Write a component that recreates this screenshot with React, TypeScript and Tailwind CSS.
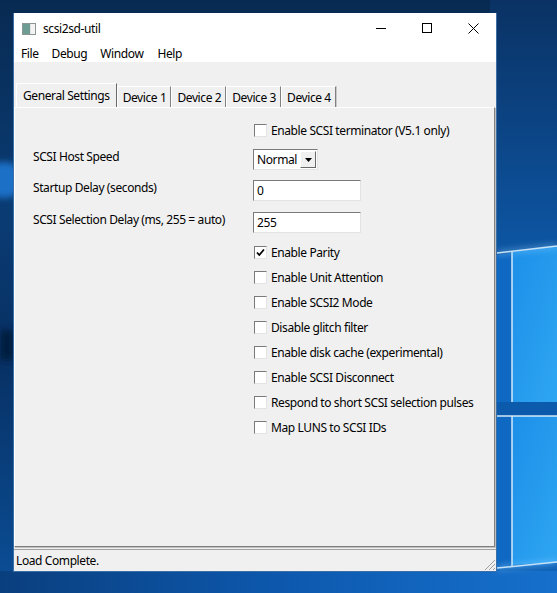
import React from 'react';

const font = { fontFamily: '"Noto Sans", "Open Sans", sans-serif' };

// Windows 10 wallpaper behind the app window
function Wallpaper() {
  return (
    <svg className="absolute inset-0" width="557" height="593" viewBox="0 0 557 593">
      <defs>
        <linearGradient id="bg" x1="0" y1="0" x2="0" y2="1">
          <stop offset="0" stopColor="#082a52" />
          <stop offset="0.35" stopColor="#0a3c74" />
          <stop offset="0.6" stopColor="#073063" />
          <stop offset="1" stopColor="#0b4f98" />
        </linearGradient>
        <linearGradient id="right" x1="0" y1="0" x2="0" y2="1">
          <stop offset="0" stopColor="#0a3264" />
          <stop offset="0.4" stopColor="#0d54a0" />
          <stop offset="1" stopColor="#0e63b8" />
        </linearGradient>
        <linearGradient id="pane" x1="0" y1="0" x2="1" y2="1">
          <stop offset="0" stopColor="#1c8fe8" />
          <stop offset="1" stopColor="#2fa6f2" />
        </linearGradient>
        <linearGradient id="bottom" x1="0" y1="0" x2="1" y2="0">
          <stop offset="0" stopColor="#0a3f7e" />
          <stop offset="0.5" stopColor="#0d58ad" />
          <stop offset="1" stopColor="#1670cc" />
        </linearGradient>
        <filter id="blur" x="-50%" y="-50%" width="200%" height="200%">
          <feGaussianBlur stdDeviation="3" />
        </filter>
      </defs>
      <rect width="557" height="593" fill="url(#bg)" />
      <ellipse cx="4" cy="180" rx="20" ry="18" fill="#1c70c6" filter="url(#blur)" />
      <rect x="0" y="330" width="14" height="30" fill="#061f40" filter="url(#blur)" />
      <rect x="490" y="0" width="67" height="593" fill="url(#right)" />
      <polygon points="497,255 557,246 557,565 497,570" fill="#0f68c2" />
      <polygon points="512,252 557,246 557,403 512,402" fill="url(#pane)" />
      <polygon points="512,416 557,416 557,562 512,565" fill="url(#pane)" />
      <rect x="497" y="402" width="60" height="14" fill="#0c5aac" />
      <rect x="0" y="571" width="557" height="22" fill="url(#bottom)" />
      <g stroke="#e8f6ff" strokeWidth="1.5" opacity="0.9">
        <line x1="512" y1="251" x2="512" y2="402" />
        <line x1="512" y1="416" x2="512" y2="566" />
        <line x1="497" y1="253" x2="557" y2="246" />
        <line x1="497" y1="416" x2="557" y2="416" />
        <line x1="497" y1="568" x2="557" y2="562" />
      </g>
      <g stroke="#8fd0ff" strokeWidth="4" opacity="0.5" filter="url(#blur)">
        <line x1="497" y1="253" x2="557" y2="246" />
        <line x1="497" y1="568" x2="557" y2="562" />
      </g>
    </svg>
  );
}

function AppIcon() {
  return (
    <svg width="14" height="12" viewBox="0 0 14 12">
      <rect x="0.5" y="0.5" width="13" height="11" fill="#dfe4e2" stroke="#8c9693" />
      <rect x="1" y="1" width="7" height="10" fill="#6f9c92" />
      <rect x="9" y="1" width="4" height="10" fill="#f4f4f4" />
    </svg>
  );
}

function CaptionButtons() {
  return (
    <div className="flex h-[30px]">
      <div className="w-[46px] flex items-center justify-center">
        <svg width="10" height="10" viewBox="0 0 10 10">
          <line x1="0" y1="5.5" x2="10" y2="5.5" stroke="#000" strokeWidth="1" />
        </svg>
      </div>
      <div className="w-[46px] flex items-center justify-center">
        <svg width="10" height="10" viewBox="0 0 10 10">
          <rect x="0.5" y="0.5" width="9" height="9" fill="none" stroke="#000" strokeWidth="1" />
        </svg>
      </div>
      <div className="w-[46px] flex items-center justify-center">
        <svg width="11" height="11" viewBox="0 0 11 11">
          <path d="M0.5 0.5 L10.5 10.5 M10.5 0.5 L0.5 10.5" stroke="#000" strokeWidth="1" />
        </svg>
      </div>
    </div>
  );
}

function CheckBox({ label, checked }: { label: string; checked?: boolean }) {
  return (
    <div className="h-[25px] flex items-center">
      <div className="w-[13px] h-[13px] border border-t-[#7a7a7a] border-l-[#7a7a7a] border-r-[#e3e3e3] border-b-[#e3e3e3] bg-white flex items-center justify-center">
        {checked && (
          <svg width="9" height="9" viewBox="0 0 9 9">
            <path d="M1 4.5 L3.3 7 L8 1.5" fill="none" stroke="#000" strokeWidth="1.8" />
          </svg>
        )}
      </div>
      <span className="ml-[4px] text-[12px] leading-[16px] tracking-[-0.4px] text-black">{label}</span>
    </div>
  );
}

function TextField({ value }: { value: string }) {
  return (
    <div className="w-[108px] h-[21px] border border-t-[#7a7a7a] border-l-[#7a7a7a] border-r-[#e3e3e3] border-b-[#e3e3e3] bg-white flex items-center pl-[3px] text-[12px] leading-[16px] tracking-[-0.4px] text-black">
      {value}
    </div>
  );
}

function Select() {
  return (
    <div className="w-[65px] h-[21px] border border-t-[#7a7a7a] border-l-[#7a7a7a] border-r-[#e3e3e3] border-b-[#e3e3e3] bg-white flex items-center">
      <span className="pl-[3px] flex-1 text-[12px] leading-[16px] tracking-[-0.4px] text-black">Normal</span>
      <div className="w-[16px] h-[17px] mr-[1px] bg-[#f0f0f0] border border-t-white border-l-white border-r-[#696969] border-b-[#696969] flex items-center justify-center">
        <svg width="7" height="4" viewBox="0 0 7 4">
          <path d="M0 0 L7 0 L3.5 4 Z" fill="#000" />
        </svg>
      </div>
    </div>
  );
}

const tabs = ['Device 1', 'Device 2', 'Device 3', 'Device 4'];

const flags = [
  { label: 'Enable Parity', checked: true },
  { label: 'Enable Unit Attention' },
  { label: 'Enable SCSI2 Mode' },
  { label: 'Disable glitch filter' },
  { label: 'Enable disk cache (experimental)' },
  { label: 'Enable SCSI Disconnect' },
  { label: 'Respond to short SCSI selection pulses' },
  { label: 'Map LUNS to SCSI IDs' },
];

export default function App() {
  return (
    <div className="relative w-[557px] h-[593px] overflow-hidden" style={font}>
      <Wallpaper />

      <div className="absolute left-[13px] top-[13px] w-[484px] h-[559px] flex flex-col bg-[#f0f0f0] border border-[#3c6fa5] border-t-0 tracking-[-0.4px]">
        {/* title bar */}
        <div className="h-[30px] bg-white flex items-center">
          <div className="ml-[8px] mt-[2px]">
            <AppIcon />
          </div>
          <span className="ml-[7px] mt-[2px] text-[12px] leading-[16px] text-black">scsi2sd-util</span>
          <div className="flex-1" />
          <CaptionButtons />
        </div>

        {/* menu bar */}
        <div className="h-[19px] bg-white flex items-center pt-[2px] text-[12px] leading-[16px] text-black">
          <span className="ml-[7px]">File</span>
          <span className="ml-[13px]">Debug</span>
          <span className="ml-[13px]">Window</span>
          <span className="ml-[14px]">Help</span>
        </div>

        {/* tabs */}
        <div className="mt-[21px] h-[24px] flex items-end pl-[2px]">
          <div className="h-[24px] px-[6px] border border-b-0 border-t-white border-l-white border-r-[#696969] flex items-start pt-[4px] text-[12px] leading-[16px] text-black">
            General Settings
          </div>
          {tabs.map((t) => (
            <div
              key={t}
              className="h-[21px] pl-[5px] pr-[4px] border border-b-0 border-t-white border-l-white border-r-[#808080] flex items-start pt-[3px] text-[12px] leading-[16px] text-black shadow-[1px_0_0_#c8c8c8]"
            >
              {t}
            </div>
          ))}
        </div>

        {/* panel */}
        <div className="flex-1 mr-[1px] border border-t-white border-l-white border-r-[#808080] border-b-[#808080] shadow-[1px_1px_0_#c0c0c0] flex flex-col pt-[10px]">
          <div className="flex">
            <div className="w-[239px]" />
            <CheckBox label="Enable SCSI terminator (V5.1 only)" />
          </div>

          <div className="flex mt-[6px] h-[21px]">
            <div className="w-[18px]" />
            <div className="w-[220px] text-[12px] leading-[16px] text-black">SCSI Host Speed</div>
            <Select />
          </div>

          <div className="flex mt-[10px] h-[21px]">
            <div className="w-[18px]" />
            <div className="w-[220px] text-[12px] leading-[16px] text-black">Startup Delay (seconds)</div>
            <TextField value="0" />
          </div>

          <div className="flex mt-[11px] h-[21px]">
            <div className="w-[18px]" />
            <div className="w-[220px] text-[12px] leading-[16px] text-black">SCSI Selection Delay (ms, 255 = auto)</div>
            <TextField value="255" />
          </div>

          <div className="flex mt-[7px]">
            <div className="w-[239px]" />
            <div className="flex flex-col">
              {flags.map((f) => (
                <CheckBox key={f.label} label={f.label} checked={f.checked} />
              ))}
            </div>
          </div>
        </div>

        {/* status bar */}
        <div className="mt-[2px] h-[22px] border-t border-[#a0a0a0] flex items-center relative">
          <span className="ml-[2px] text-[12px] leading-[16px] text-black">Load Complete.</span>
          <svg className="absolute right-[0px] bottom-[0px]" width="12" height="12" viewBox="0 0 12 12">
            <g stroke="#a0a0a0" strokeWidth="1">
              <line x1="11" y1="1" x2="1" y2="11" />
              <line x1="11" y1="5" x2="5" y2="11" />
              <line x1="11" y1="9" x2="9" y2="11" />
            </g>
          </svg>
        </div>
      </div>
    </div>
  );
}
